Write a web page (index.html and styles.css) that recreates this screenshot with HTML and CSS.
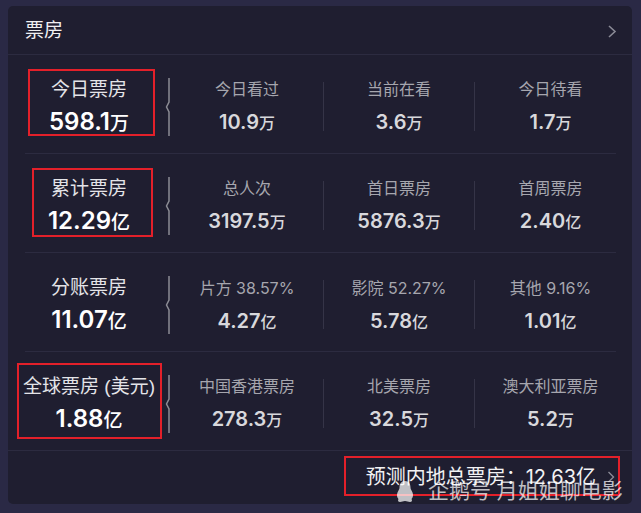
FILE: index.html
```html
<!DOCTYPE html>
<html lang="zh-CN">
<head>
<meta charset="utf-8">
<title>票房</title>
<link rel="stylesheet" href="styles.css">
</head>
<body>
<div class="card">
  <div class="head">
    <span class="title">票房</span>
    <svg class="chev" width="10" height="13" viewBox="0 0 10 13"><polyline points="2,1 8,6.5 2,12" fill="none" stroke="#8a8a96" stroke-width="1.6"/></svg>
  </div>

  <div class="row">
    <div class="main">
      <div class="mlabel">今日票房</div>
      <div class="mval">598.1<span class="u">万</span></div>
      <div class="mark mark1"></div>
    </div>
    <div class="brace"><svg width="18" height="58" viewBox="0 0 18 58"><path d="M16 0 V24 L13.5 29 L16 34 V58" fill="none" stroke="#8c8c94" stroke-width="1.5"/></svg></div>
    <div class="col c1"><div class="slabel">今日看过</div><div class="sval">10.9<span class="u">万</span></div></div>
    <div class="sep"></div>
    <div class="col c2"><div class="slabel">当前在看</div><div class="sval">3.6<span class="u">万</span></div></div>
    <div class="sep"></div>
    <div class="col c3"><div class="slabel">今日待看</div><div class="sval">1.7<span class="u">万</span></div></div>
  </div>

  <div class="row">
    <div class="main">
      <div class="mlabel">累计票房</div>
      <div class="mval">12.29<span class="u">亿</span></div>
      <div class="mark mark2"></div>
    </div>
    <div class="brace"><svg width="18" height="58" viewBox="0 0 18 58"><path d="M16 0 V24 L13.5 29 L16 34 V58" fill="none" stroke="#8c8c94" stroke-width="1.5"/></svg></div>
    <div class="col c1"><div class="slabel">总人次</div><div class="sval">3197.5<span class="u">万</span></div></div>
    <div class="sep"></div>
    <div class="col c2"><div class="slabel">首日票房</div><div class="sval">5876.3<span class="u">万</span></div></div>
    <div class="sep"></div>
    <div class="col c3"><div class="slabel">首周票房</div><div class="sval">2.40<span class="u">亿</span></div></div>
  </div>

  <div class="row">
    <div class="main">
      <div class="mlabel">分账票房</div>
      <div class="mval">11.07<span class="u">亿</span></div>
    </div>
    <div class="brace"><svg width="18" height="58" viewBox="0 0 18 58"><path d="M16 0 V24 L13.5 29 L16 34 V58" fill="none" stroke="#8c8c94" stroke-width="1.5"/></svg></div>
    <div class="col c1"><div class="slabel">片方 <span class="pct">38.57%</span></div><div class="sval">4.27<span class="u">亿</span></div></div>
    <div class="sep"></div>
    <div class="col c2"><div class="slabel">影院 <span class="pct">52.27%</span></div><div class="sval">5.78<span class="u">亿</span></div></div>
    <div class="sep"></div>
    <div class="col c3"><div class="slabel">其他 <span class="pct">9.16%</span></div><div class="sval">1.01<span class="u">亿</span></div></div>
  </div>

  <div class="row last">
    <div class="main">
      <div class="mlabel">全球票房 (美元)</div>
      <div class="mval">1.88<span class="u">亿</span></div>
      <div class="mark mark4"></div>
    </div>
    <div class="brace"><svg width="18" height="58" viewBox="0 0 18 58"><path d="M16 0 V24 L13.5 29 L16 34 V58" fill="none" stroke="#8c8c94" stroke-width="1.5"/></svg></div>
    <div class="col c1"><div class="slabel">中国香港票房</div><div class="sval">278.3<span class="u">万</span></div></div>
    <div class="sep"></div>
    <div class="col c2"><div class="slabel">北美票房</div><div class="sval">32.5<span class="u">万</span></div></div>
    <div class="sep"></div>
    <div class="col c3"><div class="slabel">澳大利亚票房</div><div class="sval">5.2<span class="u">万</span></div></div>
  </div>

  <div class="foot">
    <span class="ftext">预测内地总票房：<span class="fnum">12.63</span>亿</span>
    <svg class="fchev" width="8" height="12" viewBox="0 0 8 12"><polyline points="1.5,1 6.5,6 1.5,11" fill="none" stroke="#8a8a96" stroke-width="1.4"/></svg>
    <div class="mark markf"></div>
    <div class="wm">
      <svg class="peng" width="18" height="23" viewBox="0 0 18 23"><path d="M9 1 C5 1 3.5 4 3.5 7.5 C3.5 9 2.5 10.5 1.5 12.5 C0.5 15 1 17.5 2.5 19 C1.5 20.5 2 22 4 22 C6 22 7 21 9 21 C11 21 12 22 14 22 C16 22 16.5 20.5 15.5 19 C17 17.5 17.5 15 16.5 12.5 C15.5 10.5 14.5 9 14.5 7.5 C14.5 4 13 1 9 1 Z" fill="rgba(255,255,255,0.72)"/></svg>
      <span class="wmtext">企鹅号 月姐姐聊电影</span>
    </div>
  </div>
</div>
</body>
</html>
```

FILE: styles.css
```css
html, body {
  margin: 0;
  padding: 0;
}
body {
  background: #2a2945;
  width: 641px;
  height: 513px;
  overflow: hidden;
  padding: 6px 9px 0 8px;
  box-sizing: border-box;
  font-family: "Liberation Sans", "Noto Sans CJK SC", sans-serif;
}
.card {
  background: #1f1e30;
  border-radius: 5px;
  height: 498px;
  position: relative;
}
.head {
  height: 48px;
  border-bottom: 1px solid #2c2b40;
  display: flex;
  align-items: center;
  justify-content: space-between;
  padding: 0 15px 0 17px;
}
.title {
  font-size: 19px;
  line-height: 24px;
  color: #f0f0f2;
  margin-top: 2px;
}
.chev {
  display: block;
  margin-top: 2px;
}
.row {
  height: 98px;
  margin: 0 16px 0 17px;
  border-bottom: 1px solid #2c2b40;
  display: flex;
}
.row.last {
  border-bottom: none;
}
.main {
  width: 128px;
  flex-shrink: 0;
  display: flex;
  flex-direction: column;
  align-items: center;
  padding-top: 23px;
  position: relative;
  box-sizing: border-box;
}
.mlabel {
  font-size: 19px;
  line-height: 24px;
  color: #e4e4e8;
  white-space: nowrap;
}
.mval {
  margin-top: 8px;
  font-family: Inter, "Noto Sans CJK SC", sans-serif;
  font-size: 24px;
  line-height: 24px;
  font-weight: 600;
  color: #ffffff;
  white-space: nowrap;
}
.mval .u {
  font-family: "Noto Sans CJK SC", sans-serif;
  font-size: 19px;
  font-weight: 500;
}
.brace {
  width: 18px;
  flex-shrink: 0;
  padding-top: 23px;
  box-sizing: border-box;
}
.brace svg {
  display: block;
}
.col {
  flex-shrink: 0;
  display: flex;
  flex-direction: column;
  align-items: center;
  padding-top: 23px;
  box-sizing: border-box;
}
.c1 { width: 152px; }
.c2 { width: 150px; }
.c3 { width: 151px; }
.sep {
  width: 1px;
  flex-shrink: 0;
  height: 49px;
  margin-top: 27px;
  background: #353447;
}
.slabel {
  font-size: 16px;
  line-height: 24px;
  color: #a6a6ae;
  white-space: nowrap;
}
.pct {
  font-family: Inter, sans-serif;
  font-size: 16px;
}
.sval {
  margin-top: 8px;
  font-family: Inter, "Noto Sans CJK SC", sans-serif;
  font-size: 20px;
  line-height: 24px;
  font-weight: 600;
  color: #d8d8dc;
  white-space: nowrap;
}
.sval .u {
  font-family: "Noto Sans CJK SC", sans-serif;
  font-size: 16px;
  font-weight: 500;
}
.mark {
  position: absolute;
  border: 2px solid #e3202a;
  box-sizing: border-box;
}
.mark1 { left: 3px; top: 14px; width: 127px; height: 67px; }
.mark2 { left: 7px; top: 14px; width: 121px; height: 69px; }
.mark4 { left: -8px; top: 11px; width: 145px; height: 76px; }
.foot {
  position: relative;
  height: 53px;
  border-top: 1px solid #2c2b40;
  display: flex;
  justify-content: flex-end;
  align-items: center;
  padding-right: 17px;
  box-sizing: border-box;
}
.ftext {
  font-size: 20px;
  line-height: 24px;
  color: #f2f2f4;
}
.fnum {
  font-family: Inter, sans-serif;
}
.fchev {
  display: block;
  margin-left: 11px;
}
.markf { left: 336px; top: 5px; width: 276px; height: 40px; }
.wm {
  position: absolute;
  left: 388px;
  top: 28px;
  display: flex;
  align-items: center;
  gap: 14px;
}
.peng { display: block; }
.wmtext {
  font-size: 21px;
  line-height: 24px;
  color: rgba(255, 255, 255, 0.72);
  white-space: nowrap;
}
```
